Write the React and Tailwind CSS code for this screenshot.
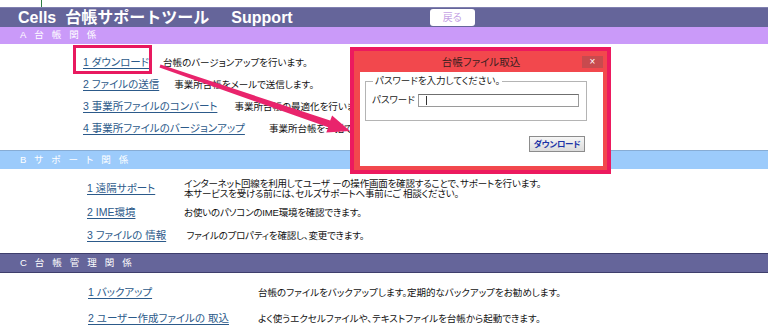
import React from 'react';

const sectionA = [
  { link: '1 ダウンロード', desc: '台帳のバージョンアップを行います。', gap: 'ml-[14px]' },
  { link: '2 ファイルの送信', desc: '事業所台帳をメールで送信します。', gap: 'ml-[15px]' },
  { link: '3 事業所ファイルのコンバート', desc: '事業所台帳の最適化を行います。', gap: 'ml-[17px]' },
  { link: '4 事業所ファイルのバージョンアップ', desc: '事業所台帳を一括でバージョンアップします。', gap: 'ml-[24px]' },
];

const sectionB = [
  {
    link: '1 遠隔サポート',
    desc: [
      'インターネット回線を利用してユーザ ーの操作画面を確認することで、サポートを行います。',
      '本サービスを受ける前には、セルズサポートへ事前にご 相談ください。',
    ],
    h: 'h-[26px]',
  },
  { link: '2 IME環境', desc: ['お使いのパソコンのIME環境を確認できます。'], h: 'h-[22px]' },
  { link: '3 ファイルの 情報', desc: [' ファイルのプロパティを確認し、変更できます。'], h: 'h-[24px]' },
];

const sectionC = [
  { link: '1 バックアップ', desc: '台帳のファイルをバックアップします。定期的なバックアップをお勧めします。', h: 'h-[24px]' },
  { link: '2 ユーザー作成ファイルの 取込', desc: 'よく使うエクセルファイルや、テキストファイルを台帳から起動できます。', h: 'h-[28px]' },
];

function SectionBar({ label, className }) {
  return (
    <div className={`flex items-center pl-[20px] text-white text-[9.5px] tracking-[8px] ${className}`}>
      {label}
    </div>
  );
}

function DialogBox() {
  return (
    <div className="absolute left-[350px] top-[47px] w-[261px] h-[127px] border-[4px] border-[#ec1a5f] bg-[#f2484d] flex flex-col">
      <div className="h-[21px] flex items-center">
        <div className="w-[26px]" />
        <div className="flex-1 text-center text-[10.5px] text-[#3a2020] pt-[2px]">台帳ファイル取込</div>
        <div className="w-[21px] h-[12px] mr-[4px] bg-[#c84a4e] text-white text-[10px] leading-[12px] text-center">×</div>
      </div>
      <div className="flex-1 ml-[6px] mr-[4px] mb-[4px] bg-white flex flex-col">
        <fieldset className="ml-[5px] mt-[3px] w-[222px] h-[46px] border border-[#b4b4b4] px-[6px]">
          <legend className="ml-[1px] px-[2px] text-[9.5px] leading-[12px] text-[#222]">パスワードを入力してください。</legend>
          <div className="flex items-center mt-[6px]">
            <span className="text-[9.5px] text-[#222] w-[46px]">パスワード</span>
            <div className="w-[161px] h-[13px] border border-[#9a9a9a] border-t-[#6f6f6f] bg-white flex items-center">
              <div className="ml-[7px] w-px h-[9px] bg-[#333]" />
            </div>
          </div>
        </fieldset>
        <div className="flex justify-end mt-[15px] mr-[18px]">
          <div className="w-[56px] h-[16px] border border-[#8c8c8c] bg-gradient-to-b from-[#f6f6f6] to-[#dcdcdc] text-[8.5px] font-bold text-[#1d34a6] leading-[14px] text-center whitespace-nowrap tracking-[-0.3px]">
            ダウンロード
          </div>
        </div>
      </div>
    </div>
  );
}

function Arrow() {
  return (
    <svg className="absolute left-0 top-0 pointer-events-none" width="768" height="332" viewBox="0 0 768 332">
      <polygon
        points="159.5,67.5 160.5,64.5 330.2,120.6 332.1,115.4 350,131 326.3,132.4 328.2,127.2"
        fill="#e9246c"
      />
    </svg>
  );
}

export default function App() {
  return (
    <div className="relative w-[768px] h-[332px] overflow-hidden bg-white font-['Liberation_Sans','Noto_Sans_CJK_JP',sans-serif] [font-feature-settings:'palt'] text-[#111]">
      <div className="h-[7px] flex">
        <div className="ml-[41px] w-px h-full bg-[#2f7d43]" />
      </div>

      <div className="h-[20px] bg-[#65659a] border-t border-[#8080b0] flex items-center pl-[18px] text-white">
        <span className="text-[16px] font-bold leading-none [font-feature-settings:normal]">
          Cells&nbsp;&nbsp;台帳サポートツール&nbsp;&nbsp;&nbsp;&nbsp;&nbsp;Support
        </span>
        <div className="ml-[137px] w-[45px] h-[17px] bg-white rounded-[3px] text-[10px] leading-[17px] text-center text-[#c4a2e4]">
          戻る
        </div>
      </div>

      <SectionBar label="A台帳関係" className="h-[17px] bg-[#ca9af9]" />

      <div className="pt-[8px] pb-[10px] pl-[83px]">
        {sectionA.map((r) => (
          <div key={r.link} className="h-[22px] flex items-center">
            <span className="text-[10.5px] text-[#2c5a8a] underline underline-offset-2">{r.link}</span>
            <span className={`${r.gap} text-[9.5px]`}>{r.desc}</span>
          </div>
        ))}
      </div>

      <SectionBar label="Bサポート関係" className="h-[19px] bg-[#9ccbfb] border-t border-[#87acd4]" />

      <div className="pt-[7px] pb-[5px] pl-[87px]">
        {sectionB.map((r) => (
          <div key={r.link} className={`${r.h} grid grid-cols-[97px_1fr] items-center`}>
            <span className="text-[10.5px] text-[#2c5a8a] underline underline-offset-2">{r.link}</span>
            <div className="text-[9.5px] leading-[10px] whitespace-pre tracking-[-0.2px]">
              {r.desc.map((d) => (
                <div key={d}>{d}</div>
              ))}
            </div>
          </div>
        ))}
      </div>

      <SectionBar label="C台帳管理関係" className="h-[20px] bg-[#65659a] border-y border-[#3e3e6c]" />

      <div className="pt-[8px] pl-[88px]">
        {sectionC.map((r) => (
          <div key={r.link} className={`${r.h} grid grid-cols-[170px_1fr] items-center`}>
            <span className="text-[10.5px] text-[#2c5a8a] underline underline-offset-2">{r.link}</span>
            <span className="text-[9.5px]">{r.desc}</span>
          </div>
        ))}
      </div>

      <div className="absolute left-[73px] top-[45px] w-[79px] h-[29px] border-[3px] border-[#e8195f]" />
      <DialogBox />
      <Arrow />
    </div>
  );
}
